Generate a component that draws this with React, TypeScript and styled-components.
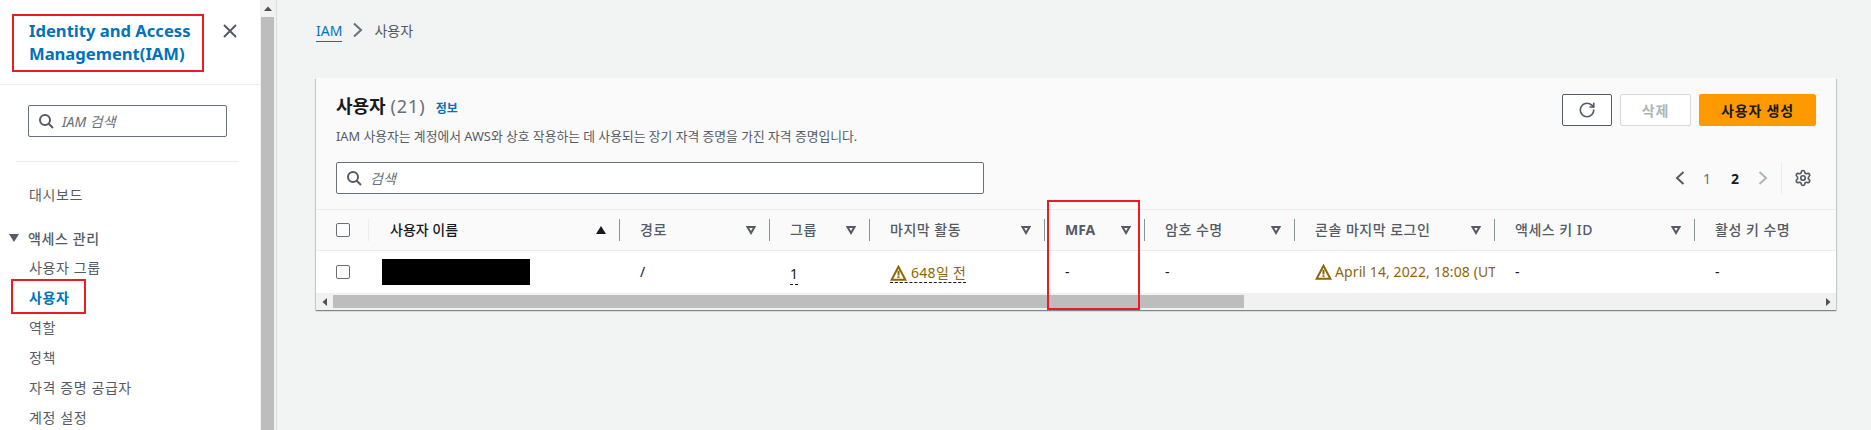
import React from "react";
import styled, { createGlobalStyle } from "styled-components";
import { RotateCw, Settings } from "lucide-react";

const Global = createGlobalStyle`
  html, body { margin: 0; padding: 0; background: #f2f3f3; }
  body { font-family: "Noto Sans", "Noto Sans CJK KR", sans-serif; font-size: 14px; color: #16191f; }
  * { box-sizing: border-box; }
`;

const Page = styled.div`
  position: relative;
  display: flex;
  width: 1871px;
  height: 430px;
  overflow: hidden;
  background: #f2f3f3;
`;

const Sidebar = styled.aside`
  width: 260px;
  flex: none;
  background: #fff;
  display: flex;
  flex-direction: column;
`;

const SideHeader = styled.div`
  flex: none;
  height: 85px;
  padding: 19px 20px 0 29px;
  border-bottom: 1px solid #eaeded;
  display: flex;
  justify-content: space-between;
  align-items: flex-start;
`;

const SideTitle = styled.a`
  font-size: 16.6px;
  line-height: 23px;
  font-weight: 700;
  color: #0073bb;
  white-space: nowrap;
`;

const CloseButton = styled.span`
  display: flex;
  margin-top: 4px;
  margin-right: 2px;
  color: #545b64;
`;

const SideBody = styled.div`
  flex: none;
  padding: 20px 21px 0 16px;
`;

const SearchBox = styled.div<{ $width: number }>`
  display: flex;
  align-items: center;
  gap: 8px;
  width: ${(p) => p.$width}px;
  height: 32px;
  padding-left: 9px;
  background: #fff;
  border: 1px solid #687078;
  border-radius: 2px;
  color: #545b64;
`;

const SideSearch = styled.div`
  padding-left: 12px;
`;

const Placeholder = styled.span`
  font-size: 14px;
  font-style: italic;
  color: #687078;
`;

const SideRule = styled.div`
  height: 1px;
  margin-top: 24px;
  background: #eaeded;
`;

const NavLink = styled.div<{ $active?: boolean; $spaced?: boolean }>`
  height: 30px;
  line-height: 28px;
  padding-left: 13px;
  font-size: 14px;
  letter-spacing: 0.6px;
  font-weight: ${(p) => (p.$active ? 700 : 400)};
  color: ${(p) => (p.$active ? "#0073bb" : "#545b64")};
  margin-top: ${(p) => (p.$spaced ? 19 : 0)}px;
  white-space: nowrap;
`;

const NavSection = styled.div`
  display: flex;
  align-items: center;
  gap: 9px;
  height: 30px;
  margin: 12px 0 1px -7px;
  font-size: 14px;
  letter-spacing: 0.6px;
  font-weight: 500;
  color: #545b64;
`;

const Scrollbar = styled.div`
  width: 17px;
  flex: none;
  background: #f1f1f1;
  border-right: 1px solid #dcdfdf;
  display: flex;
  flex-direction: column;
  align-items: flex-start;
  padding-left: 1px;
`;

const ScrollArrow = styled.div`
  width: 13px;
  height: 17px;
  display: flex;
  align-items: center;
  justify-content: center;
`;

const ScrollThumb = styled.div`
  width: 13px;
  flex: 1;
  background: #bdbdbd;
`;

const Main = styled.main`
  flex: 1;
  padding: 0 35px 0 39px;
`;

const Breadcrumb = styled.nav`
  display: flex;
  align-items: center;
  gap: 10px;
  height: 60px;
  font-size: 14px;
  color: #545b64;
`;

const CrumbLink = styled.span`
  color: #0073bb;
  line-height: 21px;
  border-bottom: 1px solid #0073bb;
  margin-top: 2px;
`;

const Card = styled.section`
  margin-top: 18px;
  background: #fff;
  box-shadow: 0 1px 1px 0 rgba(0, 28, 36, 0.3), 1px 1px 1px 0 rgba(0, 28, 36, 0.15), -1px 1px 1px 0 rgba(0, 28, 36, 0.15);
`;

const CardHeader = styled.div`
  background: #fafafa;
  height: 132px;
  padding: 16px 20px 0 20px;
  border-bottom: 1px solid #eaeded;
`;

const TitleRow = styled.div`
  display: flex;
  justify-content: space-between;
  align-items: flex-start;
`;

const TitleBlock = styled.div`
  margin-top: -2px;
`;

const Heading = styled.div`
  display: flex;
  align-items: baseline;
  gap: 10px;
  height: 28px;
  line-height: 28px;
`;

const HeadingText = styled.h2`
  margin: 0;
  font-size: 18px;
  font-weight: 700;
  color: #16191f;
`;

const Count = styled.span`
  font-weight: 400;
  letter-spacing: 1px;
  color: #687078;
`;

const Info = styled.a`
  font-size: 12px;
  font-weight: 700;
  color: #0073bb;
`;

const Description = styled.p`
  margin: 6px 0 0;
  font-size: 12.8px;
  line-height: 20px;
  color: #545b64;
`;

const Actions = styled.div`
  display: flex;
  gap: 8px;
`;

const Button = styled.button<{ $variant?: "primary" | "disabled" | "icon" }>`
  height: 32px;
  width: ${(p) => (p.$variant === "primary" ? 117 : p.$variant === "disabled" ? 71 : 50)}px;
  border-radius: 2px;
  font-family: inherit;
  font-size: 14px;
  letter-spacing: 0.8px;
  font-weight: 700;
  display: flex;
  align-items: center;
  justify-content: center;
  padding: 0;
  background: ${(p) => (p.$variant === "primary" ? "#ff9900" : "#fff")};
  border: 1px solid ${(p) => (p.$variant === "primary" ? "#ff9900" : p.$variant === "disabled" ? "#d5dbdb" : "#545b64")};
  color: ${(p) => (p.$variant === "primary" ? "#16191f" : p.$variant === "disabled" ? "#aab7b8" : "#545b64")};
`;

const ToolRow = styled.div`
  display: flex;
  justify-content: space-between;
  align-items: center;
  margin-top: 16px;
  height: 32px;
`;

const Pager = styled.div`
  display: flex;
  flex: none;
  align-items: center;
  height: 32px;
  padding-right: 4px;
  color: #545b64;
`;

const PageNumber = styled.span<{ $current?: boolean }>`
  width: 28px;
  text-align: center;
  font-size: 14px;
  font-weight: ${(p) => (p.$current ? 700 : 400)};
  color: ${(p) => (p.$current ? "#16191f" : "#687078")};
`;

const PagerIcon = styled.span<{ $next?: boolean }>`
  display: flex;
  flex: none;
  width: 16px;
  justify-content: center;
  margin: ${(p) => (p.$next ? "0 0 0 6px" : "0 5px 0 0")};
  color: ${(p) => (p.$next ? "#aab7b8" : "#545b64")};
`;

const PagerRule = styled.div`
  flex: none;
  width: 1px;
  height: 32px;
  margin: 0 12px 0 10px;
  background: #eaeded;
`;

const TableGrid = styled.div`
  display: grid;
  grid-template-columns: 53px 251px 150px 100px 175px 100px 150px 200px 200px 141px;
`;

const HeadRow = styled(TableGrid)`
  height: 41px;
  background: #fafafa;
  border-bottom: 1px solid #eaeded;
`;

const HeadCell = styled.div<{ $sorted?: boolean; $strong?: boolean; $last?: boolean }>`
  position: relative;
  display: flex;
  align-items: center;
  justify-content: space-between;
  padding: 0 ${(p) => (p.$last ? 0 : 14)}px 0 ${(p) => (p.$sorted ? 21 : 20)}px;
  font-size: 14px;
  letter-spacing: ${(p) => (p.$sorted || p.$strong ? 0 : 0.5)}px;
  font-weight: ${(p) => (p.$strong ? 700 : 500)};
  color: ${(p) => (p.$sorted ? "#16191f" : "#545b64")};
  white-space: nowrap;
  &::after {
    content: "";
    display: ${(p) => (p.$last ? "none" : "block")};
    position: absolute;
    right: 0;
    top: 9px;
    height: 22px;
    width: 1px;
    background: #879596;
  }
`;

const HeadLabel = styled.span`
  margin-top: -2px;
`;

const CheckHead = styled.div`
  position: relative;
  display: flex;
  align-items: center;
  padding-left: 20px;
  &::after {
    content: "";
    position: absolute;
    right: 0;
    top: 9px;
    height: 22px;
    width: 1px;
    background: #eaeded;
  }
`;

const Check = styled.span`
  display: block;
  flex: none;
  width: 14px;
  height: 14px;
  background: #fff;
  border: 1px solid #687078;
  border-radius: 2px;
`;

const BodyRow = styled(TableGrid)`
  height: 42px;
  background: #fff;
`;

const BodyCell = styled.div<{ $warn?: boolean }>`
  display: flex;
  align-items: center;
  gap: ${(p) => (p.$warn ? 3 : 4)}px;
  padding-left: 20px;
  font-size: 14px;
  letter-spacing: ${(p) => (p.$warn ? 0.1 : 0)}px;
  color: ${(p) => (p.$warn ? "#8d6605" : "#16191f")};
  white-space: nowrap;
  overflow: hidden;
`;

const CellText = styled.span`
  margin-top: -2px;
`;

const Redacted = styled.div`
  flex: none;
  width: 148px;
  height: 26px;
  margin-left: -7px;
  background: #000;
`;

const Dashed = styled.span`
  line-height: 20px;
  border-bottom: 1px dashed #16191f;
  margin-top: 4px;
`;

const DashedWarn = styled.span`
  display: flex;
  align-items: center;
  gap: 4px;
  border-bottom: 1px dashed #16191f;
  line-height: 19px;
  letter-spacing: 0.3px;
  color: #8d6605;
  margin-top: 2px;
`;

const WarnGlyph = styled.svg`
  flex: none;
`;

const HScroll = styled.div`
  display: flex;
  align-items: center;
  height: 17px;
  background: #f1f1f1;
`;

const HScrollArrow = styled.div`
  width: 17px;
  display: flex;
  align-items: center;
  justify-content: center;
  flex: none;
`;

const HScrollThumb = styled.div`
  width: 911px;
  height: 13px;
  background: #bdbdbd;
`;

const HScrollTrack = styled.div`
  flex: 1;
`;

const RedBox = styled.div<{ $x: number; $y: number; $w: number; $h: number }>`
  position: absolute;
  left: ${(p) => p.$x}px;
  top: ${(p) => p.$y}px;
  width: ${(p) => p.$w}px;
  height: ${(p) => p.$h}px;
  border: 2px solid #ed1c24;
  pointer-events: none;
`;

const SearchIcon = () => (
  <svg width="16" height="16" viewBox="0 0 16 16" fill="none" stroke="currentColor" strokeWidth="2">
    <circle cx="7" cy="7" r="5" />
    <path d="M10.5 10.5L15 15" />
  </svg>
);

const SortDown = () => (
  <svg width="10" height="10" viewBox="0 0 10 10" fill="none" stroke="#545b64" strokeWidth="2">
    <path d="M1.5 2h7L5 8z" />
  </svg>
);

const SortUp = () => (
  <svg width="10" height="10" viewBox="0 0 10 10" fill="#16191f">
    <path d="M0 9h10L5 1z" />
  </svg>
);

const Warning = () => (
  <WarnGlyph width="17" height="16" viewBox="0 0 17 16" fill="none">
    <path d="M8.5 1.8L1.6 14.8h13.8z" stroke="#8d6605" strokeWidth="2" />
    <path d="M8.5 5.8v4.6M8.5 11.2v1.8" stroke="#8d6605" strokeWidth="2" />
  </WarnGlyph>
);

const TinyArrow = ({ d }: { d: string }) => (
  <svg width="8" height="8" viewBox="0 0 8 8" fill="#505050">
    <path d={d} />
  </svg>
);

const columns = [
  { label: "경로" },
  { label: "그룹" },
  { label: "마지막 활동" },
  { label: "MFA", strong: true },
  { label: "암호 수명" },
  { label: "콘솔 마지막 로그인" },
  { label: "액세스 키 ID" },
];

const navItems = ["사용자 그룹", "사용자", "역할", "정책", "자격 증명 공급자", "계정 설정"];

export default function App() {
  return (
    <Page>
      <Global />
      <Sidebar>
        <SideHeader>
          <SideTitle>
            Identity and Access
            <br />
            Management(IAM)
          </SideTitle>
          <CloseButton>
            <svg width="16" height="16" viewBox="0 0 16 16" fill="none" stroke="currentColor" strokeWidth="2">
              <path d="M2 2l12 12M14 2L2 14" />
            </svg>
          </CloseButton>
        </SideHeader>
        <SideBody>
          <SideSearch>
            <SearchBox $width={199}>
              <SearchIcon />
              <Placeholder>IAM 검색</Placeholder>
            </SearchBox>
          </SideSearch>
          <SideRule />
          <NavLink $spaced>대시보드</NavLink>
          <NavSection>
            <svg width="10" height="8" viewBox="0 0 10 8" fill="#545b64">
              <path d="M0 0h10L5 8z" />
            </svg>
            액세스 관리
          </NavSection>
          {navItems.map((item) => (
            <NavLink key={item} $active={item === "사용자"}>
              {item}
            </NavLink>
          ))}
        </SideBody>
      </Sidebar>
      <Scrollbar>
        <ScrollArrow>
          <TinyArrow d="M4 1.5L8 6H0z" />
        </ScrollArrow>
        <ScrollThumb />
      </Scrollbar>
      <Main>
        <Breadcrumb>
          <CrumbLink>IAM</CrumbLink>
          <svg width="12" height="16" viewBox="0 0 12 16" fill="none" stroke="#687078" strokeWidth="2">
            <path d="M2 1.5L9 8l-7 6.5" />
          </svg>
          <span>사용자</span>
        </Breadcrumb>
        <Card>
          <CardHeader>
            <TitleRow>
              <TitleBlock>
                <Heading>
                  <HeadingText>
                    사용자 <Count>(21)</Count>
                  </HeadingText>
                  <Info>정보</Info>
                </Heading>
                <Description>IAM 사용자는 계정에서 AWS와 상호 작용하는 데 사용되는 장기 자격 증명을 가진 자격 증명입니다.</Description>
              </TitleBlock>
              <Actions>
                <Button $variant="icon" aria-label="새로 고침">
                  <RotateCw size={18} strokeWidth={2.2} />
                </Button>
                <Button $variant="disabled">삭제</Button>
                <Button $variant="primary">사용자 생성</Button>
              </Actions>
            </TitleRow>
            <ToolRow>
              <SearchBox $width={648}>
                <SearchIcon />
                <Placeholder>검색</Placeholder>
              </SearchBox>
              <Pager>
                <PagerIcon>
                  <svg width="12" height="16" viewBox="0 0 12 16" fill="none" stroke="currentColor" strokeWidth="2">
                    <path d="M9.5 2L3 8l6.5 6" />
                  </svg>
                </PagerIcon>
                <PageNumber>1</PageNumber>
                <PageNumber $current>2</PageNumber>
                <PagerIcon $next>
                  <svg width="12" height="16" viewBox="0 0 12 16" fill="none" stroke="currentColor" strokeWidth="2">
                    <path d="M2.5 2L9 8l-6.5 6" />
                  </svg>
                </PagerIcon>
                <PagerRule />
                <Settings size={18} strokeWidth={2.2} color="#545b64" />
              </Pager>
            </ToolRow>
          </CardHeader>
          <HeadRow>
            <CheckHead>
              <Check />
            </CheckHead>
            <HeadCell $sorted>
              <HeadLabel>사용자 이름</HeadLabel>
              <SortUp />
            </HeadCell>
            {columns.map((c) => (
              <HeadCell key={c.label} $strong={c.strong}>
                <HeadLabel>{c.label}</HeadLabel>
                <SortDown />
              </HeadCell>
            ))}
            <HeadCell $last>
              <HeadLabel>활성 키 수명</HeadLabel>
            </HeadCell>
          </HeadRow>
          <BodyRow>
            <BodyCell>
              <Check />
            </BodyCell>
            <BodyCell>
              <Redacted />
            </BodyCell>
            <BodyCell>
              <CellText>/</CellText>
            </BodyCell>
            <BodyCell>
              <Dashed>1</Dashed>
            </BodyCell>
            <BodyCell>
              <DashedWarn>
                <Warning />
                648일 전
              </DashedWarn>
            </BodyCell>
            <BodyCell>
              <CellText>-</CellText>
            </BodyCell>
            <BodyCell>
              <CellText>-</CellText>
            </BodyCell>
            <BodyCell $warn>
              <Warning />
              <CellText>April 14, 2022, 18:08 (UT</CellText>
            </BodyCell>
            <BodyCell>
              <CellText>-</CellText>
            </BodyCell>
            <BodyCell>
              <CellText>-</CellText>
            </BodyCell>
          </BodyRow>
          <HScroll>
            <HScrollArrow>
              <TinyArrow d="M1.5 4L6 0v8z" />
            </HScrollArrow>
            <HScrollThumb />
            <HScrollTrack />
            <HScrollArrow>
              <TinyArrow d="M6.5 4L2 0v8z" />
            </HScrollArrow>
          </HScroll>
        </Card>
      </Main>
      <RedBox $x={12} $y={14} $w={192} $h={58} />
      <RedBox $x={11} $y={279} $w={75} $h={35} />
      <RedBox $x={1047} $y={200} $w={93} $h={110} />
    </Page>
  );
}
